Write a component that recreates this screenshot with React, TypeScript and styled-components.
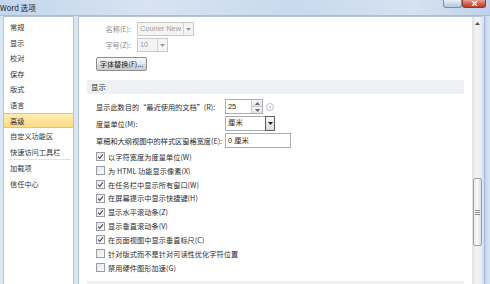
import React, { FC } from 'react';
import styled, { createGlobalStyle } from 'styled-components';

const GlobalStyle = createGlobalStyle`
    html, body {
        margin: 0;
        padding: 0;
        width: 490px;
        height: 284px;
        overflow: hidden;
        background: #dbe6f3;
    }
    * {
        box-sizing: border-box;
    }
`;

const CJK = `"Noto Sans CJK SC", "Noto Sans", sans-serif`;

const Window = styled.div`
    width: 490px;
    height: 284px;
    display: flex;
    flex-direction: column;
    font-family: ${CJK};
    color: #2b2b2b;
    background: #dbe6f3;
`;

const TitleBar = styled.div`
    height: 16px;
    flex: 0 0 16px;
    display: flex;
    align-items: flex-start;
    background: linear-gradient(90deg, #c4d6ec 0%, #d7e3f2 30%, #c9daee 60%, #d5e2f1 85%, #bfd2ea 100%);
    border-bottom: 1px solid #a9bfd9;
`;

const Title = styled.div`
    font-size: 7.6px;
    line-height: 15px;
    margin-left: 0;
    color: #1a1a1a;
    flex: 1;
`;

const CaptionButton = styled.div<{ $close?: boolean }>`
    width: ${({ $close }) => ($close ? 24 : 19)}px;
    height: 8px;
    border: 1px solid ${({ $close }) => ($close ? '#8a3b33' : '#7b8fa8')};
    border-top: none;
    border-radius: 0 0 3px 3px;
    background: ${({ $close }) =>
        $close
            ? 'linear-gradient(180deg, #e6a297 0%, #cf5a47 60%, #c13f2d 100%)'
            : 'linear-gradient(180deg, #e8eef6 0%, #c9d6e6 60%, #b7c7dc 100%)'};
    display: flex;
    align-items: center;
    justify-content: center;
    margin-right: ${({ $close }) => ($close ? 4 : 0)}px;
`;

const Body = styled.div`
    flex: 1;
    display: flex;
    padding: 0 0 0 3px;
    min-height: 0;
`;

const Nav = styled.div`
    width: 71px;
    border: 1px solid #b7c3d3;
    border-bottom: none;
    background: #ffffff;
    padding-top: 2px;
    display: flex;
    flex-direction: column;
`;

const NavItem = styled.div<{ $active?: boolean }>`
    height: 15.6px;
    line-height: 15.6px;
    font-size: 7.2px;
    padding-left: 6px;
    color: #333;
    background: ${({ $active }) =>
        $active ? 'linear-gradient(180deg, #fdebb0 0%, #fbdc86 100%)' : 'transparent'};
    border: 1px solid ${({ $active }) => ($active ? '#e8c56a' : 'transparent')};
    border-left: none;
    border-right: none;
    white-space: nowrap;
`;

const NavSeparator = styled.div`
    height: 1px;
    margin: 0 2px 0 4px;
    background: #dfe3e8;
`;

const Gap = styled.div`
    width: 4px;
    flex: 0 0 4px;
`;

const Panel = styled.div`
    flex: 1;
    display: flex;
    border: 1px solid #b7c3d3;
    border-bottom: none;
    border-right: none;
    background: #ffffff;
    min-width: 0;
`;

const Content = styled.div`
    flex: 1;
    padding: 5px 8px 0 8px;
    display: flex;
    flex-direction: column;
    overflow: hidden;
    min-width: 0;
`;

const FontRow = styled.div<{ $mt?: number }>`
    display: flex;
    align-items: center;
    height: 14px;
    margin-top: ${({ $mt }) => $mt ?? 0}px;
`;

const FontLabel = styled.div`
    width: 46px;
    text-align: right;
    padding-right: 2px;
    font-size: 7.2px;
    color: #8a8a8a;
    margin-right: 4px;
`;

const Combo = styled.div<{ $w: number; $h?: number; $disabled?: boolean }>`
    width: ${({ $w }) => $w}px;
    height: ${({ $h }) => $h ?? 14}px;
    display: flex;
    border: 1px solid ${({ $disabled }) => ($disabled ? '#c9c9c9' : '#a5acb5')};
    background: ${({ $disabled }) => ($disabled ? '#f4f4f4' : '#ffffff')};
`;

const ComboText = styled.div<{ $muted?: boolean }>`
    flex: 1;
    font-family: "Liberation Sans", ${CJK};
    font-size: 7.4px;
    line-height: 12px;
    padding-left: 2px;
    color: ${({ $muted }) => ($muted ? '#a0a0a0' : '#2b2b2b')};
    white-space: nowrap;
    overflow: hidden;
`;

const ComboArrow = styled.div<{ $dark?: boolean }>`
    width: 10px;
    border-left: 1px solid ${({ $dark }) => ($dark ? '#6f6f6f' : '#d2d2d2')};
    ${({ $dark }) => ($dark ? 'border: 1px solid #5f5f5f; margin: -1px -1px -1px 0;' : '')}
    background: ${({ $dark }) => ($dark ? 'linear-gradient(180deg, #f6f6f6, #dcdcdc)' : '#f4f4f4')};
    display: flex;
    align-items: center;
    justify-content: center;
`;

const PushButton = styled.div`
    margin: 5px 0 0 9px;
    width: 51px;
    height: 14px;
    border: 1px solid #8d8f92;
    border-radius: 2px;
    background: linear-gradient(180deg, #f5f5f5 0%, #e9e9e9 50%, #d9d9d9 51%, #cfcfcf 100%);
    font-size: 7.2px;
    line-height: 12px;
    text-align: center;
    color: #222;
    white-space: nowrap;
`;

const SectionBar = styled.div<{ $mt: number }>`
    margin-top: ${({ $mt }) => $mt}px;
    height: 14px;
    flex: 0 0 14px;
    background: #eff0f2;
    font-size: 7.4px;
    line-height: 14px;
    padding-left: 4px;
    color: #333;
`;

const FieldRow = styled.div<{ $mt: number }>`
    display: flex;
    align-items: center;
    height: 15px;
    margin-top: ${({ $mt }) => $mt}px;
    padding-left: 9px;
`;

const FieldLabel = styled.div`
    width: 129px;
    font-size: 7.2px;
    white-space: nowrap;
    color: #2b2b2b;
`;

const TextBox = styled.div<{ $w: number }>`
    width: ${({ $w }) => $w}px;
    height: 15px;
    border: 1px solid #abadb3;
    background: #fff;
    font-size: 7.4px;
    line-height: 13px;
    padding-left: 2px;
    font-family: "Liberation Sans", ${CJK};
    white-space: nowrap;
`;

const SpinBox = styled.div`
    display: flex;
    height: 15px;
    border: 1px solid #abadb3;
    background: #fff;
`;

const SpinText = styled.div`
    width: 25px;
    font-family: "Liberation Sans", sans-serif;
    font-size: 7.4px;
    line-height: 13px;
    padding-left: 2px;
`;

const SpinButtons = styled.div`
    width: 11px;
    display: flex;
    flex-direction: column;
    border-left: 1px solid #c6c9ce;
`;

const SpinPart = styled.div`
    flex: 1;
    display: flex;
    align-items: center;
    justify-content: center;
    background: linear-gradient(180deg, #f7f7f7, #e4e4e4);
    & + & {
        border-top: 1px solid #c6c9ce;
    }
`;

const InfoIcon = styled.div`
    margin-left: 3px;
    width: 8px;
    height: 8px;
    border: 1px solid #b9c0c8;
    border-radius: 50%;
    display: flex;
    align-items: center;
    justify-content: center;
`;

const InfoDot = styled.div`
    width: 2px;
    height: 2px;
    border-radius: 50%;
    background: #b9c0c8;
`;

const CheckList = styled.div`
    margin-top: 2px;
    display: flex;
    flex-direction: column;
`;

const CheckRow = styled.div`
    height: 13.85px;
    display: flex;
    align-items: center;
    padding-left: 9px;
`;

const Box = styled.div`
    width: 9px;
    height: 9px;
    border: 1px solid #9a9ea4;
    background: linear-gradient(135deg, #e5e7ea 0%, #fafafa 100%);
    display: flex;
    align-items: center;
    justify-content: center;
    margin-right: 3px;
`;

const CheckText = styled.div`
    font-size: 7.2px;
    white-space: nowrap;
    color: #2b2b2b;
    letter-spacing: 0.05px;
`;

const ScrollBar = styled.div`
    width: 10px;
    flex: 0 0 10px;
    background: linear-gradient(90deg, #e6e6e6, #f3f3f3 40%, #ececec);
    border-left: 1px solid #e2e2e2;
    display: flex;
    flex-direction: column;
    align-items: center;
`;

const ScrollArrow = styled.div`
    height: 13px;
    width: 100%;
    display: flex;
    align-items: center;
    justify-content: center;
`;

const Thumb = styled.div`
    margin-top: 148px;
    width: 9px;
    height: 68px;
    border: 1px solid #9aa0a8;
    border-radius: 2px;
    background: linear-gradient(90deg, #ececec, #f8f8f8 50%, #dedede);
    display: flex;
    align-items: center;
    justify-content: center;
`;

const Frame = styled.div`
    width: 8px;
    flex: 0 0 8px;
    background: linear-gradient(90deg, #d8e3f1 0%, #d8e3f1 25%, #9fb5d2 30%, #c7d7ec 45%, #dbe6f3 100%);
`;

const navItems = ['常规', '显示', '校对', '保存', '版式', '语言', '高级', '自定义功能区', '快速访问工具栏'];
const navExtra = ['加载项', '信任中心'];

const checks: { label: string; checked: boolean }[] = [
    { label: '以字符宽度为度量单位(W)', checked: true },
    { label: '为 HTML 功能显示像素(X)', checked: false },
    { label: '在任务栏中显示所有窗口(W)', checked: true },
    { label: '在屏幕提示中显示快捷键(H)', checked: true },
    { label: '显示水平滚动条(Z)', checked: true },
    { label: '显示垂直滚动条(V)', checked: true },
    { label: '在页面视图中显示垂直标尺(C)', checked: true },
    { label: '针对版式而不是针对可读性优化字符位置', checked: false },
    { label: '禁用硬件图形加速(G)', checked: false },
];

const DownArrow: FC<{ color?: string }> = ({ color = '#9a9a9a' }) => (
    <svg width="5" height="3" viewBox="0 0 5 3">
        <path d="M0 0 L5 0 L2.5 3 Z" fill={color} />
    </svg>
);

const UpArrow: FC<{ color?: string }> = ({ color = '#6a6a6a' }) => (
    <svg width="5" height="3" viewBox="0 0 5 3">
        <path d="M0 3 L5 3 L2.5 0 Z" fill={color} />
    </svg>
);

const CheckMark: FC = () => (
    <svg width="7" height="7" viewBox="0 0 7 7">
        <path d="M1 3.6 L2.8 5.4 L6 1.4" fill="none" stroke="#4a4f57" strokeWidth="1.1" />
    </svg>
);

const App: FC = () => {
    return (
        <Window>
            <GlobalStyle />
            <TitleBar>
                <Title>Word 选项</Title>
                <CaptionButton />
                <CaptionButton $close>
                    <svg width="7" height="5" viewBox="0 0 7 5">
                        <path d="M1 0 L6 5 M6 0 L1 5" stroke="#fff" strokeWidth="1.3" />
                    </svg>
                </CaptionButton>
            </TitleBar>
            <Body>
                <Nav>
                    {navItems.map((item) => (
                        <NavItem key={item} $active={item === '高级'}>
                            {item}
                        </NavItem>
                    ))}
                    <NavSeparator />
                    {navExtra.map((item) => (
                        <NavItem key={item}>{item}</NavItem>
                    ))}
                </Nav>
                <Gap />
                <Panel>
                    <Content>
                        <FontRow>
                            <FontLabel>名称(E):</FontLabel>
                            <Combo $w={57} $disabled>
                                <ComboText $muted>Courier New</ComboText>
                                <ComboArrow>
                                    <DownArrow />
                                </ComboArrow>
                            </Combo>
                        </FontRow>
                        <FontRow $mt={2}>
                            <FontLabel>字号(Z):</FontLabel>
                            <Combo $w={31} $disabled>
                                <ComboText $muted>10</ComboText>
                                <ComboArrow>
                                    <DownArrow />
                                </ComboArrow>
                            </Combo>
                        </FontRow>
                        <PushButton>字体替换(F)...</PushButton>

                        <SectionBar $mt={9}>显示</SectionBar>

                        <FieldRow $mt={5}>
                            <FieldLabel>显示此数目的“最近使用的文档”(R):</FieldLabel>
                            <SpinBox>
                                <SpinText>25</SpinText>
                                <SpinButtons>
                                    <SpinPart>
                                        <UpArrow />
                                    </SpinPart>
                                    <SpinPart>
                                        <DownArrow color="#6a6a6a" />
                                    </SpinPart>
                                </SpinButtons>
                            </SpinBox>
                            <InfoIcon>
                                <InfoDot />
                            </InfoIcon>
                        </FieldRow>
                        <FieldRow $mt={2}>
                            <FieldLabel>度量单位(M):</FieldLabel>
                            <Combo $w={50} $h={15}>
                                <ComboText>厘米</ComboText>
                                <ComboArrow $dark>
                                    <DownArrow color="#222" />
                                </ComboArrow>
                            </Combo>
                        </FieldRow>
                        <FieldRow $mt={2}>
                            <FieldLabel>草稿和大纲视图中的样式区窗格宽度(E):</FieldLabel>
                            <TextBox $w={66}>0 厘米</TextBox>
                        </FieldRow>

                        <CheckList>
                            {checks.map((c) => (
                                <CheckRow key={c.label}>
                                    <Box>{c.checked && <CheckMark />}</Box>
                                    <CheckText>{c.label}</CheckText>
                                </CheckRow>
                            ))}
                        </CheckList>

                        <SectionBar $mt={6} />
                    </Content>
                    <ScrollBar>
                        <ScrollArrow>
                            <UpArrow color="#555" />
                        </ScrollArrow>
                        <Thumb>
                            <svg width="5" height="5" viewBox="0 0 5 5">
                                <path d="M0 0.5 H5 M0 2.5 H5 M0 4.5 H5" stroke="#8a8f96" strokeWidth="1" />
                            </svg>
                        </Thumb>
                    </ScrollBar>
                </Panel>
                <Frame />
            </Body>
        </Window>
    );
};

export default App;
